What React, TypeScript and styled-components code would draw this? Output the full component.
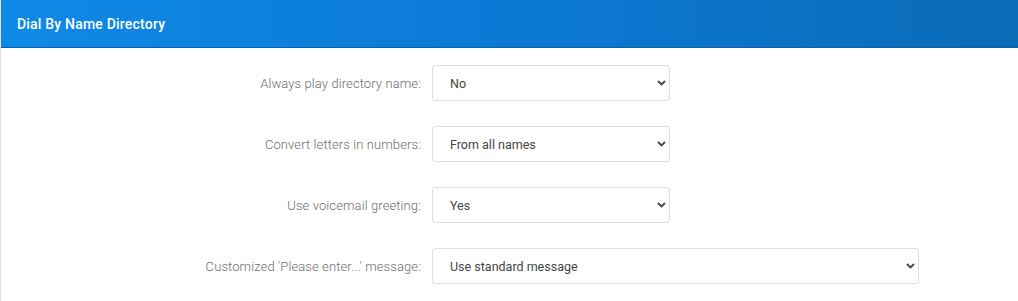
import React from 'react'
import styled, { createGlobalStyle } from 'styled-components'

const GlobalStyle = createGlobalStyle`
    body {
        margin: 0;
        background: #ffffff;
        font-family: Roboto, 'Liberation Sans', sans-serif;
    }
`

const Panel = styled.div`
    width: 1018px;
    height: 301px;
    border-left: 1px solid #e3e3e3;
    box-sizing: border-box;
    background: #fff;
    overflow: hidden;
`

const Header = styled.div`
    height: 48px;
    box-sizing: border-box;
    display: flex;
    align-items: center;
    padding: 1px 0 0 17px;
    margin-left: -1px;
    background: linear-gradient(90deg, #0f89e7 0%, #0b78d3 55%, #0a6bb6 100%);
    border-bottom: 1px solid #0a62a8;
    color: #fff;
    font-size: 14px;
    font-weight: 500;
    letter-spacing: 0.2px;
`

const Form = styled.div`
    display: grid;
    grid-template-columns: 420px auto;
    column-gap: 11px;
    row-gap: 25px;
    padding-top: 17px;
    align-items: center;
    justify-items: start;
`

const Label = styled.label`
    justify-self: end;
    font-size: 13px;
    font-weight: 300;
    letter-spacing: 0.1px;
    color: #6e6e6e;
`

const SelectWrap = styled.div<{ w: number }>`
    position: relative;
    width: ${(p) => p.w}px;
    height: 36px;
`

const Select = styled.select`
    appearance: none;
    -webkit-appearance: none;
    width: 100%;
    height: 100%;
    box-sizing: border-box;
    border: 1px solid #dedede;
    border-radius: 3px;
    background: #fff;
    padding: 0 30px 0 17px;
    font-family: Roboto, 'Liberation Sans', sans-serif;
    font-size: 12.5px;
    color: #444;
    outline: none;
`

const Chevron = styled.svg`
    position: absolute;
    right: 4px;
    top: 15px;
    pointer-events: none;
`

const Field = ({ label, value, options, w }: { label: string; value: string; options: string[]; w: number }) => (
    <>
        <Label>{label}</Label>
        <SelectWrap w={w}>
            <Select defaultValue={value}>
                {options.map((o) => (
                    <option key={o}>{o}</option>
                ))}
            </Select>
            <Chevron width="9" height="6" viewBox="0 0 9 6">
                <path d="M1 1 L4.5 4.5 L8 1" fill="none" stroke="#444" strokeWidth="1.8" />
            </Chevron>
        </SelectWrap>
    </>
)

export default function App() {
    return (
        <>
            <GlobalStyle />
            <Panel>
                <Header>Dial By Name Directory</Header>
                <Form>
                    <Field label="Always play directory name:" value="No" options={['No', 'Yes']} w={238} />
                    <Field
                        label="Convert letters in numbers:"
                        value="From all names"
                        options={['From all names', 'From first names', 'From last names']}
                        w={238}
                    />
                    <Field label="Use voicemail greeting:" value="Yes" options={['Yes', 'No']} w={238} />
                    <Field
                        label="Customized 'Please enter...' message:"
                        value="Use standard message"
                        options={['Use standard message', 'Use custom message']}
                        w={487}
                    />
                </Form>
            </Panel>
        </>
    )
}
